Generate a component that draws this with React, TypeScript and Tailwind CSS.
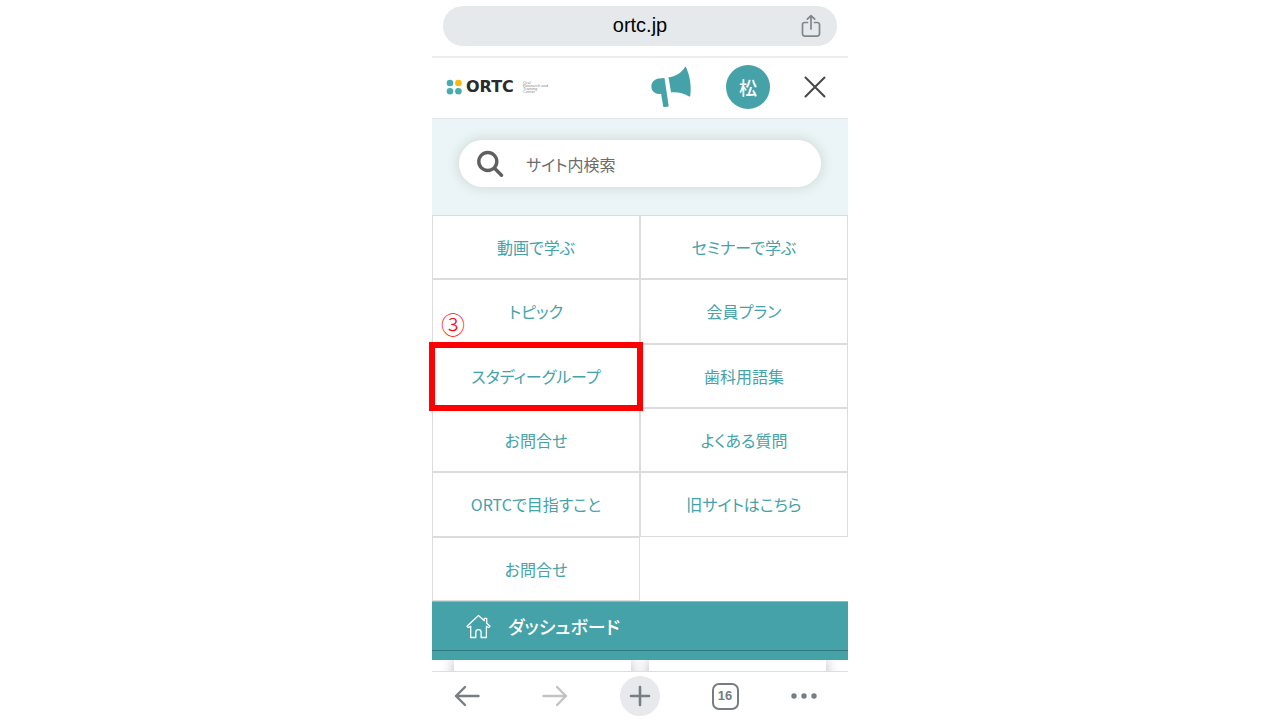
import React from "react";

type MenuItem = { label: string; step?: string };

const menu: MenuItem[] = [
  { label: "動画で学ぶ" },
  { label: "セミナーで学ぶ" },
  { label: "トピック" },
  { label: "会員プラン" },
  { label: "スタディーグループ", step: "③" },
  { label: "歯科用語集" },
  { label: "お問合せ" },
  { label: "よくある質問" },
  { label: "ORTCで目指すこと" },
  { label: "旧サイトはこちら" },
  { label: "お問合せ" },
];

function AddressBar() {
  return (
    <div className="border-b-2 border-[#ececec] px-[11px] pt-[6px] pb-[10px]">
      <div className="relative flex h-10 items-center justify-center rounded-full bg-[#e6e9ec]">
        <span className="pb-0.5 font-['Liberation_Sans',sans-serif] text-xl text-black">ortc.jp</span>
        <button type="button" aria-label="共有" className="absolute right-4 top-2">
          <svg width="20" height="24" viewBox="0 0 20 24" fill="none" stroke="#80868b" strokeWidth="1.7" strokeLinecap="round" strokeLinejoin="round">
            <path d="M6.5 8.5H3.8a2.3 2.3 0 0 0-2.3 2.3v9a2.3 2.3 0 0 0 2.3 2.3h12.4a2.3 2.3 0 0 0 2.3-2.3v-9a2.3 2.3 0 0 0-2.3-2.3h-2.7M10 15V2M6.3 5.2 10 1.6l3.7 3.6" />
          </svg>
        </button>
      </div>
    </div>
  );
}

function Logo() {
  return (
    <a href="#top" className="flex items-center">
      <svg width="16" height="16" viewBox="0 0 16 16" aria-hidden="true">
        <circle cx="4" cy="4" r="3.3" fill="#48abb0" />
        <circle cx="12.4" cy="4" r="3.3" fill="#fbb90e" />
        <circle cx="4" cy="12.3" r="3.3" fill="#48abb0" />
        <circle cx="12.4" cy="12.3" r="3.3" fill="#48abb0" />
      </svg>
      <span className="ml-1 w-[53px] font-['DejaVu_Sans',sans-serif] text-base leading-4 font-bold text-[#2d2a2b]">ORTC</span>
      <span className="ml-1 font-['Liberation_Sans',sans-serif] text-[4px] leading-[3px] text-[#8a8a8a]">
        Oral<br />Research and<br />Training<br />Center
      </span>
    </a>
  );
}

function SiteHeader() {
  return (
    <header className="flex h-[61px] items-center border-b border-[#e6e4e6] pr-[21px] pb-0.5 pl-[14px]">
      <Logo />
      <button type="button" aria-label="お知らせ" className="ml-auto">
        <svg width="42" height="42" viewBox="0 0 42 42" fill="#44a2a8">
          <path d="M14.5 12.1 9 12.6C4.3 13.2 1.1 16.6 1.4 21.2c.3 4 3.8 6.8 7.6 6.7l2.1-.1 2 12.2c.1.8.7 1.2 1.5 1.1l3-.3c.7-.1 1.1-.6 1-1.3L16.7 26.7z" />
          <path d="M18.5 11.3C25.500 10.4 31 7.3 34.8 1.2c.6-.8 1.2-.6 1.4.3C40 10.5 41.5 20 40.3 29.7c-.1.9-.8 1.1-1.6.6-5-3.1-11.4-4.4-17.6-3.800z" />
        </svg>
      </button>
      <button type="button" aria-label="アカウント" className="ml-[34px] flex size-11 items-center justify-center rounded-full bg-[#44a2a8] text-lg font-medium text-white">
        松
      </button>
      <button type="button" aria-label="閉じる" className="ml-[33px]">
        <svg width="24" height="24" viewBox="0 0 24 24" fill="none" stroke="#474747" strokeWidth="2" strokeLinecap="round">
          <path d="M2.5 2.5 21.5 21.5M21.5 2.5 2.5 21.5" />
        </svg>
      </button>
    </header>
  );
}

function SearchBox() {
  return (
    <form role="search" className="bg-[#ebf5f7] px-[27px] pt-[21px] pb-7">
      <label className="flex h-[47px] items-center rounded-full bg-white pl-[17px] shadow-[0_0_12px_2px_#d2dcd9]">
        <svg width="28" height="28" viewBox="0 0 28 28" fill="none" stroke="#5f5f5f" strokeWidth="3.4" strokeLinecap="round" aria-hidden="true">
          <circle cx="11.8" cy="11.5" r="9" />
          <path d="m18.5 18.3 7 7" />
        </svg>
        <input
          type="search"
          aria-label="サイト内検索"
          placeholder="サイト内検索"
          className="ml-[22px] min-w-0 flex-1 bg-transparent text-base outline-none placeholder:text-[#6c6c6c]"
        />
      </label>
    </form>
  );
}

function MenuGrid() {
  return (
    <nav className="grid min-h-[386px] grid-cols-2 grid-rows-6">
      {menu.map((item, i) => (
        <a key={i} href="#menu" className="relative flex items-center justify-center border border-[#dcdcdc] text-base text-[#44a2a8]">
          {item.label}
          {item.step && (
            <>
              <span className="absolute -inset-x-1 -top-[3px] -bottom-1 z-10 border-6 border-[#ff0000]" />
              <span className="absolute -top-[33px] left-2 text-2xl leading-6 font-light text-[#ff0000]">{item.step}</span>
            </>
          )}
        </a>
      ))}
    </nav>
  );
}

function Dashboard() {
  return (
    <>
      <div className="border-t border-[#7fbfc3] bg-[#44a2a8] pb-[9px]">
        <a href="#dashboard" className="flex h-[49px] items-center border-b border-[#32787c] pl-[34px] text-lg font-medium text-white">
          <svg width="25" height="25" viewBox="0 0 25 25" fill="none" stroke="#ffffff" strokeWidth="1.3" strokeLinejoin="round" aria-hidden="true">
            <path d="M12.5 1.5 1 12.3l1.3 1.2 2.4-1.2v11.2h5.1v-5.2a2.6 2.6 0 0 1 5.3 0v5.2h5.300V12.3l2.3 1.2 1.3-1.200-3.300-3.100V4.300h-2.400v2.400z" />
          </svg>
          <span className="ml-[17px]">ダッシュボード</span>
        </a>
      </div>
      <div className="flex h-[11px] justify-between overflow-hidden px-[22px]">
        <div className="h-10 w-[177px] shadow-[0_0_14px_#b5b5b5]" />
        <div className="h-10 w-[177px] shadow-[0_0_14px_#b5b5b5]" />
      </div>
    </>
  );
}

function BrowserToolbar() {
  return (
    <div className="flex h-[49px] items-center justify-between border-t border-[#dedede] pr-[30px] pl-[21px]">
      <button type="button" aria-label="戻る">
        <svg width="28" height="24" viewBox="0 0 28 24" fill="none" stroke="#757e82" strokeWidth="2.4" strokeLinecap="round" strokeLinejoin="round">
          <path d="M25.5 12H3M12 3l-9 9 9 9" />
        </svg>
      </button>
      <button type="button" aria-label="進む" className="ml-2">
        <svg width="28" height="24" viewBox="0 0 28 24" fill="none" stroke="#c3c3c3" strokeWidth="2.4" strokeLinecap="round" strokeLinejoin="round">
          <path d="M2.5 12H25M16 3l9 9-9 9" />
        </svg>
      </button>
      <button type="button" aria-label="新しいタブ" className="flex size-10 items-center justify-center rounded-full bg-[#e8e9ed]">
        <svg width="22" height="22" viewBox="0 0 22 22" fill="none" stroke="#757e82" strokeWidth="2.6" strokeLinecap="round">
          <path d="M11 2v18M2 11h18" />
        </svg>
      </button>
      <button type="button" aria-label="タブ一覧" className="flex size-[27px] items-center justify-center rounded-[7px] border-2 border-[#757e82] font-['Liberation_Sans',sans-serif] text-[13px] font-bold text-[#757e82]">
        16
      </button>
      <button type="button" aria-label="その他">
        <svg width="28" height="8" viewBox="0 0 28 8" fill="#757e82">
          <circle cx="4" cy="4" r="2.7" />
          <circle cx="14" cy="4" r="2.7" />
          <circle cx="24" cy="4" r="2.7" />
        </svg>
      </button>
    </div>
  );
}

export default function App() {
  return (
    <div className="min-h-screen bg-white font-['Noto_Sans_CJK_JP',sans-serif] [font-feature-settings:'palt']">
      <main className="mx-auto w-full max-w-[416px]">
        <AddressBar />
        <SiteHeader />
        <SearchBox />
        <MenuGrid />
        <Dashboard />
        <BrowserToolbar />
      </main>
    </div>
  );
}
